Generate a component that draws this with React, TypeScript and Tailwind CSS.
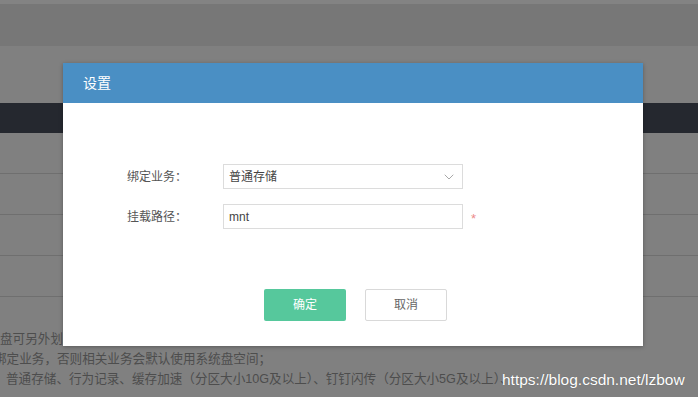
import { ChevronDown } from "lucide-react"

const cjk = "font-['Liberation_Sans','Noto_Sans_CJK_SC',sans-serif]"

function FormRow({ label, children, required }: { label: string; children: React.ReactNode; required?: boolean }) {
    return (
        <div className="flex items-center h-[25px] pl-[64px]">
            <span className="w-[96px] shrink-0 text-[12px] text-[#555]">{label}</span>
            <div className="w-[240px] h-[25px] border border-[#dcdcdc] flex items-center px-[5px] text-[12px] text-[#444]">
                {children}
            </div>
            {required && <span className="ml-[8px] text-[13px] text-[#ec8a8a] leading-none mt-[4px]">*</span>}
        </div>
    )
}

export default function App() {
    return (
        <div className={`relative w-[698px] h-[397px] overflow-hidden bg-[#808080] ${cjk}`}>
            {/* dimmed page behind the dialog */}
            <div className="h-[4px] bg-[#838383]" />
            <div className="h-[42px] bg-[#777777]" />
            <div className="h-[57px] bg-[#808080]" />
            <div className="h-[30px] bg-[#25282f]" />
            <div className="h-[41px] border-b border-[#6f6f6f]" />
            <div className="h-[41px] border-b border-[#6f6f6f]" />
            <div className="h-[41px] border-b border-[#6f6f6f]" />
            <div className="h-[41px] border-b border-[#6f6f6f]" />
            <div className="pt-[32px] text-[12.6px] leading-[20px] text-[#4d4d4d] whitespace-nowrap">
                <p>盘可另外划分分区给业务；</p>
                <p className="-ml-[6px]">绑定业务，否则相关业务会默认使用系统盘空间；</p>
                <p className="ml-[6px]">普通存储、行为记录、缓存加速（分区大小10G及以上）、钉钉闪传（分区大小5G及以上）、</p>
            </div>

            {/* dialog */}
            <div className="absolute left-[63px] top-[63px] w-[580px] h-[283px] bg-white shadow-[0_1px_4px_rgba(0,0,0,0.3)] flex flex-col">
                <div className="h-[40px] bg-[#4a8fc4] flex items-center pl-[20px] text-[14px] text-white">设置</div>
                <div className="flex flex-col gap-[15px] pt-[61px]">
                    <FormRow label="绑定业务：">
                        <span className="flex-1">普通存储</span>
                        <ChevronDown className="w-[16px] h-[16px] text-[#888]" strokeWidth={1.1} />
                    </FormRow>
                    <FormRow label="挂载路径：" required>
                        <span>mnt</span>
                    </FormRow>
                </div>
                <div className="flex gap-[19px] pl-[201px] mt-[60px]">
                    <button className="w-[82px] h-[32px] rounded-[2px] bg-[#56c89c] text-white text-[12px]">确定</button>
                    <button className="w-[82px] h-[32px] rounded-[2px] border border-[#d9d9d9] text-[#666] text-[12px]">取消</button>
                </div>
            </div>

            {/* watermark */}
            <span className="absolute left-[502px] top-[368px] text-[15.5px] text-white font-['Liberation_Sans',sans-serif] [text-shadow:0_0_1px_rgba(0,0,0,0.3)]">
                https://blog.csdn.net/lzbow
            </span>
        </div>
    )
}
